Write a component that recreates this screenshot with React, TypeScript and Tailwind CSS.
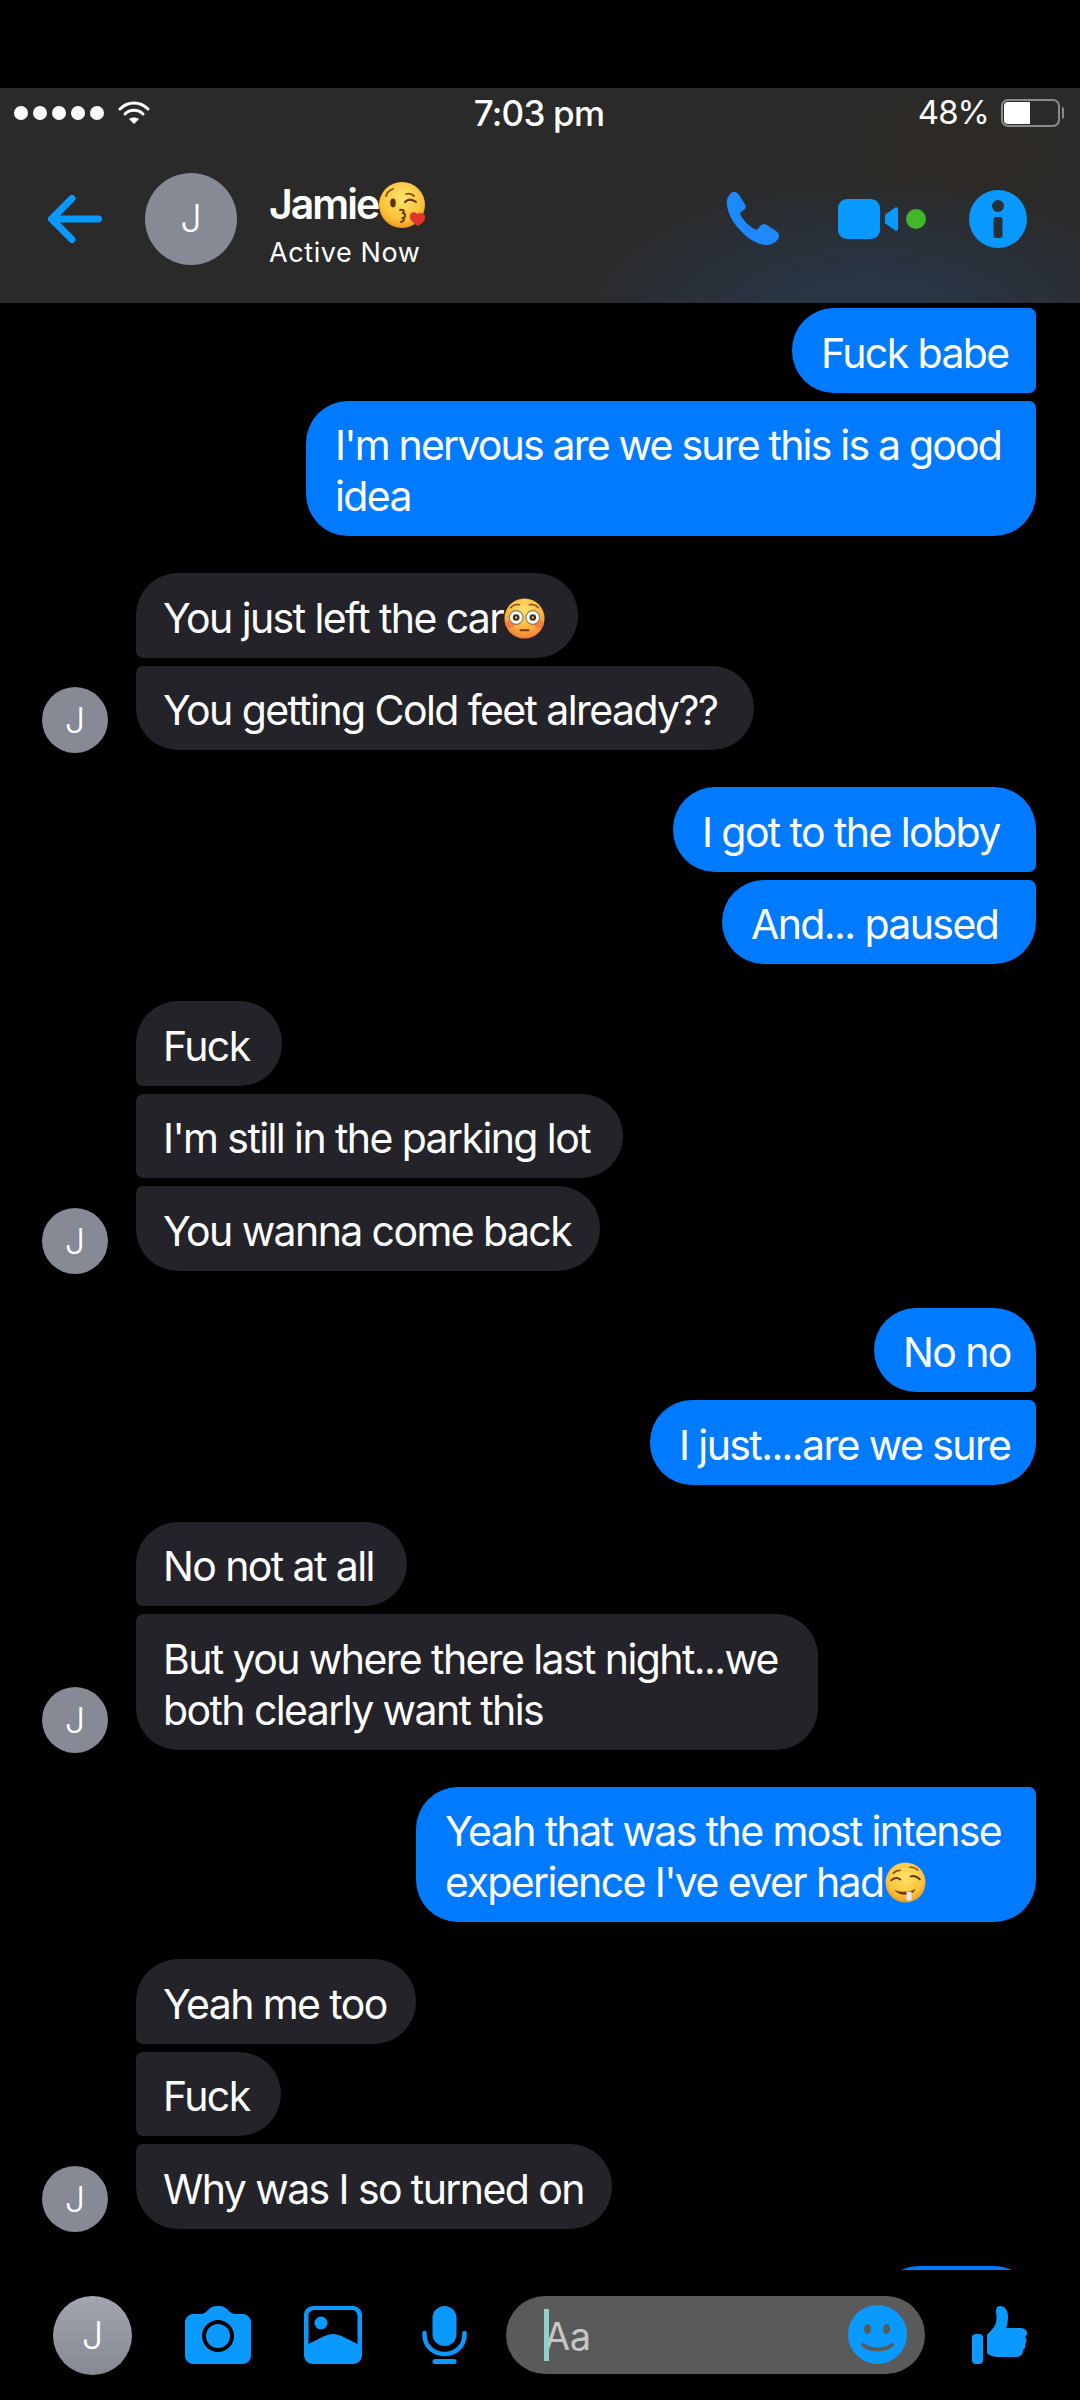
import type { ReactNode } from "react";

const FONT = "font-['Inter','Liberation_Sans',sans-serif]";

function KissEmoji({ className }: { className?: string }) {
  return (
    <svg viewBox="0 0 50 48" className={className}>
      <defs>
        <radialGradient id="kiss-face" cx="50%" cy="35%" r="65%">
          <stop offset="0%" stopColor="#ffe36b" />
          <stop offset="70%" stopColor="#fdc33a" />
          <stop offset="100%" stopColor="#f09a1c" />
        </radialGradient>
      </defs>
      <circle cx="24" cy="24" r="23" fill="url(#kiss-face)" />
      <path d="M8 15c1-4 4-6 7-7" stroke="#7a4a12" strokeWidth="1.8" fill="none" strokeLinecap="round" />
      <ellipse cx="15" cy="22" rx="2.8" ry="4.4" fill="#5a3510" />
      <path d="M27 21c3-3 7-3 11 0" stroke="#5a3510" strokeWidth="2" fill="none" strokeLinecap="round" />
      <path d="M28 13c3-1 6 0 8 2" stroke="#7a4a12" strokeWidth="1.8" fill="none" strokeLinecap="round" />
      <path d="M22 29c3-1 5 1 3 3 3 1 3 4 0 5 2 1 1 3-2 4" stroke="#6b3c0e" strokeWidth="2" fill="none" strokeLinecap="round" />
      <path d="M40 45c-6-4-9-7-8-11 1-3 5-4 7-1 3-2 7-1 8 2 1 4-2 7-7 10z" fill="#e5322d" />
    </svg>
  );
}

function FlushedEmoji({ className }: { className?: string }) {
  return (
    <svg viewBox="0 0 42 42" className={className}>
      <defs>
        <radialGradient id="flush-face" cx="50%" cy="30%" r="70%">
          <stop offset="0%" stopColor="#ffe36b" />
          <stop offset="55%" stopColor="#fdbb45" />
          <stop offset="100%" stopColor="#f27f3a" />
        </radialGradient>
      </defs>
      <circle cx="21" cy="21" r="20.5" fill="url(#flush-face)" />
      <ellipse cx="6" cy="27" rx="5" ry="4" fill="#f2603f" opacity="0.55" />
      <ellipse cx="36" cy="27" rx="5" ry="4" fill="#f2603f" opacity="0.55" />
      <path d="M7 10c2-3 6-4 9-3M26 7c3-1 7 0 9 3" stroke="#7a4a12" strokeWidth="1.5" fill="none" strokeLinecap="round" />
      <circle cx="12.5" cy="20" r="7" fill="#fff" stroke="#8c7a5c" strokeWidth="1.2" />
      <circle cx="29.5" cy="20" r="7" fill="#fff" stroke="#8c7a5c" strokeWidth="1.2" />
      <circle cx="12.5" cy="20" r="3.4" fill="#4a3010" />
      <circle cx="29.5" cy="20" r="3.4" fill="#4a3010" />
      <circle cx="12.5" cy="20" r="1" fill="#fff" />
      <circle cx="29.5" cy="20" r="1" fill="#fff" />
      <path d="M17 33h8" stroke="#7a3c0e" strokeWidth="2.2" strokeLinecap="round" />
    </svg>
  );
}

function DroolEmoji({ className }: { className?: string }) {
  return (
    <svg viewBox="0 0 40 40" className={className}>
      <defs>
        <radialGradient id="drool-face" cx="50%" cy="35%" r="65%">
          <stop offset="0%" stopColor="#ffe36b" />
          <stop offset="70%" stopColor="#fdc33a" />
          <stop offset="100%" stopColor="#e99a1e" />
        </radialGradient>
      </defs>
      <circle cx="20" cy="20" r="19.5" fill="url(#drool-face)" />
      <path d="M6 18c3-3 6-3 9-1M25 14c3-1 6 0 9 3" stroke="#5a3510" strokeWidth="1.8" fill="none" strokeLinecap="round" />
      <path d="M8 11c2-2 4-3 7-3M24 5c3 0 6 1 8 3" stroke="#7a4a12" strokeWidth="1.4" fill="none" strokeLinecap="round" />
      <path d="M9 27c6 3 15 3 21-1-2 4-5 6-10 6-5 0-9-2-11-5z" fill="#6b3c0e" />
      <path d="M21 29h5v7c0 2-5 2-5 0z" fill="#dfe8ee" />
    </svg>
  );
}

function Bubble({ mine, width, corners, children }: { mine?: boolean; width: string; corners: string; children: ReactNode }) {
  return (
    <div
      className={`${width} ${corners} ${mine ? "self-end bg-[#007aff] pl-[29px]" : "bg-[#242329] pl-[27px]"} whitespace-nowrap pb-[13.75px] pt-[19.75px] text-[41px] leading-[51px] tracking-[-1.6px] text-white`}
    >
      {children}
    </div>
  );
}

// sent bubbles: right edge square between neighbours
function Sent({ children }: { children: ReactNode }) {
  return <div className="mt-[37px] flex flex-col gap-[8px] first:mt-0">{children}</div>;
}

function Received({ children }: { children: ReactNode }) {
  return (
    <div className="mt-[37px] flex items-end gap-[28px] pl-[42px]">
      <div className="-mb-[3px] flex h-[66px] w-[66px] shrink-0 items-center justify-center rounded-full bg-[#868a94] text-[36px] font-light text-white">
        J
      </div>
      <div className="flex flex-col items-start gap-[8px]">{children}</div>
    </div>
  );
}

function StatusBar() {
  return (
    <div className="flex h-[50px] items-center justify-between pl-[14px] pr-[16px] text-white">
      <div className="flex w-[300px] items-center gap-[5px]">
        {[0, 1, 2, 3, 4].map((dot) => (
          <span key={dot} className="h-[14px] w-[14px] rounded-full bg-white" />
        ))}
        <svg viewBox="0 0 32 24" className="ml-[9px] h-[24px] w-[32px]" fill="none" stroke="#fff" strokeLinecap="round">
          <path d="M2 8c8-8 20-8 28 0" strokeWidth="3" />
          <path d="M7 13c5-5 13-5 18 0" strokeWidth="3" />
          <path d="M16 23l-5-5c3-2 7-2 10 0z" fill="#fff" stroke="none" />
        </svg>
      </div>
      <div className="text-[35px] font-medium tracking-[-0.8px]">7:03 pm</div>
      <div className="flex w-[300px] items-center justify-end gap-[12px]">
        <span className="text-[33px] tracking-[-1px]">48%</span>
        <div className="flex items-center gap-[2px]">
          <div className="h-[28px] w-[59px] rounded-[7px] border-2 border-[#8a8a8a] p-[1px]">
            <div className="h-full w-[26px] rounded-l-[4px] bg-white" />
          </div>
          <div className="h-[12px] w-[2px] rounded-r-full bg-[#8a8a8a]" />
        </div>
      </div>
    </div>
  );
}

function Header() {
  return (
    <div className="h-[215px] shrink-0 bg-[radial-gradient(ellipse_300px_150px_at_870px_235px,#283747_0%,#283442_35%,rgba(42,42,42,0)_100%),radial-gradient(ellipse_200px_110px_at_960px_60px,#2e2a25_0%,rgba(42,42,42,0)_100%),linear-gradient(#2a2a2a,#2a2a2a)]">
      <StatusBar />
      <div className="flex h-[165px] items-center pb-[4px]">
        <svg viewBox="0 0 54 48" className="ml-[48px] h-[48px] w-[54px]" fill="none" stroke="#0a99ff" strokeWidth="7" strokeLinecap="round" strokeLinejoin="round">
          <path d="M24 3.5L3.5 24 24 44.5M3.5 24H50.5" />
        </svg>
        <div className="ml-[43px] flex h-[92px] w-[92px] items-center justify-center rounded-full bg-[#868a94] text-[38px] font-light text-white">
          J
        </div>
        <div className="ml-[32px] mt-[12px] flex flex-col">
          <div className="flex h-[48px] items-center text-[41px] font-semibold tracking-[-2px] text-white">
            Jamie
            <KissEmoji className="h-[48px] w-[50px]" />
          </div>
          <div className="mt-[9px] text-[27px] leading-[30px] tracking-[0.6px] text-white">Active Now</div>
        </div>
        <div className="ml-auto mr-[53px] flex items-center">
          <svg viewBox="0 0 53 53" className="h-[53px] w-[53px]" fill="#1e88ff">
            <path d="M5 1c3-2 6-1 8 2l6 9c1 2 1 4-1 6l-3 2c-1 1-1 2 0 4 3 5 7 9 13 13 2 1 3 1 4 0l2-3c2-2 5-2 7-1l9 6c3 2 4 5 2 8-3 4-7 6-13 6-8-1-17-6-24-14C7 31 2 22 1 13 0 8 2 4 5 1z" />
          </svg>
          <div className="ml-[59px] h-[40px] w-[42px] rounded-[9px] bg-[#0a99ff]" />
          <svg viewBox="0 0 13 24" className="ml-[5px] h-[24px] w-[13px]" fill="#0a99ff">
            <path d="M11 0c1 0 2 1 2 2v20c0 1-1 2-2 2L1 17c-.7-.5-1-1-1-2V9c0-1 .3-1.500 1-2z" />
          </svg>
          <div className="ml-[8px] h-[20px] w-[20px] rounded-full bg-[#42b72a]" />
          <svg viewBox="0 0 58 58" className="ml-[43px] h-[58px] w-[58px]">
            <circle cx="29" cy="29" r="29" fill="#0a99ff" />
            <circle cx="29" cy="16" r="6" fill="#26303a" />
            <rect x="24.500" y="27" width="9" height="21" rx="2.500" fill="#26303a" />
          </svg>
        </div>
      </div>
    </div>
  );
}

function Composer() {
  return (
    <div className="flex flex-1 items-start pt-[26px]">
      <div className="ml-[53px] flex h-[79px] w-[79px] items-center justify-center rounded-full bg-gradient-to-b from-[#a2a6b0] to-[#858993] text-[38px] font-light text-white">
        J
      </div>
      <svg viewBox="0 0 66 58" className="ml-[53px] mt-[10px] h-[58px] w-[66px]">
        <path
          fillRule="evenodd"
          fill="#0a99ff"
          d="M8 8h8c3 0 5-2 7-4 3-3 5-4 10-4s7 1 10 4c2 2 4 4 7 4h8c4 0 8 4 8 8v34c0 4-4 8-8 8H8c-4 0-8-4-8-8V16c0-4 4-8 8-8zM33 14a16 16 0 1 0 0 32 16 16 0 0 0 0-32z"
        />
        <circle cx="33" cy="30" r="12" fill="#0a99ff" />
      </svg>
      <svg viewBox="0 0 58 58" className="ml-[53px] mt-[10px] h-[58px] w-[58px]">
        <path
          fillRule="evenodd"
          fill="#0a99ff"
          d="M9 0h40c5 0 9 4 9 9v40c0 5-4 9-9 9H9c-5 0-9-4-9-9V9c0-5 4-9 9-9zm1 4c-3 0-5.500 2.500-5.500 5.500V38l13-6.500c4-2 8-3.500 11.500-3.500s7.500 1.500 11.500 3.500L53.500 38V9.500C53.500 6.500 51 4 48 4z"
        />
        <circle cx="17" cy="17" r="6.500" fill="#0a99ff" />
      </svg>
      <svg viewBox="0 0 45 58" className="ml-[60px] mt-[10px] h-[58px] w-[45px]" fill="#0a99ff">
        <rect x="10.500" y="0" width="24" height="40" rx="12" />
        <path d="M2.500 27v2c0 11 9 19 20 19s20-8 20-19v-2" fill="none" stroke="#0a99ff" strokeWidth="4.500" strokeLinecap="round" />
        <rect x="10.500" y="53" width="24" height="5" rx="2.500" />
      </svg>
      <div className="relative ml-[39px] flex h-[78px] w-[419px] items-center rounded-full bg-[#5a5a5a]">
        <div className="absolute left-[38px] top-[13px] h-[52px] w-[5px] bg-[#8fd1c9]" />
        <span className="ml-[38px] mt-[3px] text-[38px] tracking-[-0.5px] text-[#c6c6c6]">Aa</span>
        <svg viewBox="0 0 59 59" className="absolute left-[342px] top-[9px] h-[59px] w-[59px]">
          <circle cx="29.500" cy="29.500" r="29.500" fill="#0a99ff" />
          <ellipse cx="19.500" cy="24" rx="3.500" ry="5" fill="#5a5a5a" />
          <ellipse cx="38.500" cy="24" rx="3.500" ry="5" fill="#5a5a5a" />
          <path d="M15 40c8 6 21 6 29 0" fill="none" stroke="#5a5a5a" strokeWidth="4" strokeLinecap="round" />
        </svg>
      </div>
      <svg viewBox="0 0 56 58" className="ml-[47px] mt-[10px] h-[58px] w-[56px]" fill="#0a99ff">
        <rect x="0" y="28" width="11" height="30" rx="4" />
        <path d="M28 0c5 0 8 4 8 11 0 5-1 9-2 11h13c5 0 8 2 8 5 0 2-1 3-2 4 2 2 2 5 0 7 1 2 0 5-2 6 0 4-2 7-7 7H26c-5 0-9-2-11-4V29c2-3 5-5 7-8 3-5 3-9 2-15 0-4 1-6 4-6z" />
      </svg>
    </div>
  );
}

export default function App() {
  return (
    <div className={`${FONT} flex h-[2400px] w-[1080px] flex-col overflow-hidden bg-black`}>
      <div className="h-[88px] shrink-0" />
      <Header />
      <div className="flex h-[1967px] shrink-0 flex-col overflow-hidden pr-[44px] pt-[5px]">
        <Sent>
          <Bubble mine width="w-[244px]" corners="rounded-l-[42px] rounded-r-[7px]">Fuck babe</Bubble>
          <Bubble mine width="w-[730px]" corners="rounded-l-[42px] rounded-tr-[7px] rounded-br-[42px]">
            <span className="tracking-[-1.8px]">I'm nervous are we sure this is a good</span>
            <br />
            idea
          </Bubble>
        </Sent>
        <Received>
          <Bubble width="w-[442px]" corners="rounded-r-[42px] rounded-tl-[42px] rounded-bl-[7px]">
            You just left the car
            <FlushedEmoji className="ml-[1px] inline-block h-[41px] w-[41px] align-[-6px]" />
          </Bubble>
          <Bubble width="w-[618px]" corners="rounded-r-[42px] rounded-tl-[7px] rounded-bl-[42px]">You getting Cold feet already??</Bubble>
        </Received>
        <Sent>
          <Bubble mine width="w-[363px]" corners="rounded-l-[42px] rounded-tr-[42px] rounded-br-[7px]">I got to the lobby</Bubble>
          <Bubble mine width="w-[314px]" corners="rounded-l-[42px] rounded-tr-[7px] rounded-br-[42px]">And... paused</Bubble>
        </Sent>
        <Received>
          <Bubble width="w-[146px]" corners="rounded-r-[42px] rounded-tl-[42px] rounded-bl-[7px]">Fuck</Bubble>
          <Bubble width="w-[487px]" corners="rounded-r-[42px] rounded-l-[7px]">I'm still in the parking lot</Bubble>
          <Bubble width="w-[464px]" corners="rounded-r-[42px] rounded-tl-[7px] rounded-bl-[42px]">You wanna come back</Bubble>
        </Received>
        <Sent>
          <Bubble mine width="w-[162px]" corners="rounded-l-[42px] rounded-tr-[42px] rounded-br-[7px]">No no</Bubble>
          <Bubble mine width="w-[386px]" corners="rounded-l-[42px] rounded-tr-[7px] rounded-br-[42px]">I just....are we sure</Bubble>
        </Sent>
        <Received>
          <Bubble width="w-[271px]" corners="rounded-r-[42px] rounded-tl-[42px] rounded-bl-[7px]">No not at all</Bubble>
          <Bubble width="w-[682px]" corners="rounded-r-[42px] rounded-tl-[7px] rounded-bl-[42px]">
            But you where there last night...we
            <br />
            both clearly want this
          </Bubble>
        </Received>
        <Sent>
          <Bubble mine width="w-[620px]" corners="rounded-l-[42px] rounded-tr-[7px] rounded-br-[42px]">
            Yeah that was the most intense
            <br />
            experience I've ever had
            <DroolEmoji className="ml-[1px] inline-block h-[41px] w-[41px] align-[-6px]" />
          </Bubble>
        </Sent>
        <Received>
          <Bubble width="w-[280px]" corners="rounded-r-[42px] rounded-tl-[42px] rounded-bl-[7px]">Yeah me too</Bubble>
          <Bubble width="w-[145px]" corners="rounded-r-[42px] rounded-l-[7px]">Fuck</Bubble>
          <Bubble width="w-[476px]" corners="rounded-r-[42px] rounded-tl-[7px] rounded-bl-[42px]">Why was I so turned on</Bubble>
        </Received>
        <Sent>
          <Bubble mine width="w-[159px]" corners="rounded-l-[42px] rounded-tr-[42px] rounded-br-[7px]">&nbsp;</Bubble>
        </Sent>
      </div>
      <Composer />
    </div>
  );
}
